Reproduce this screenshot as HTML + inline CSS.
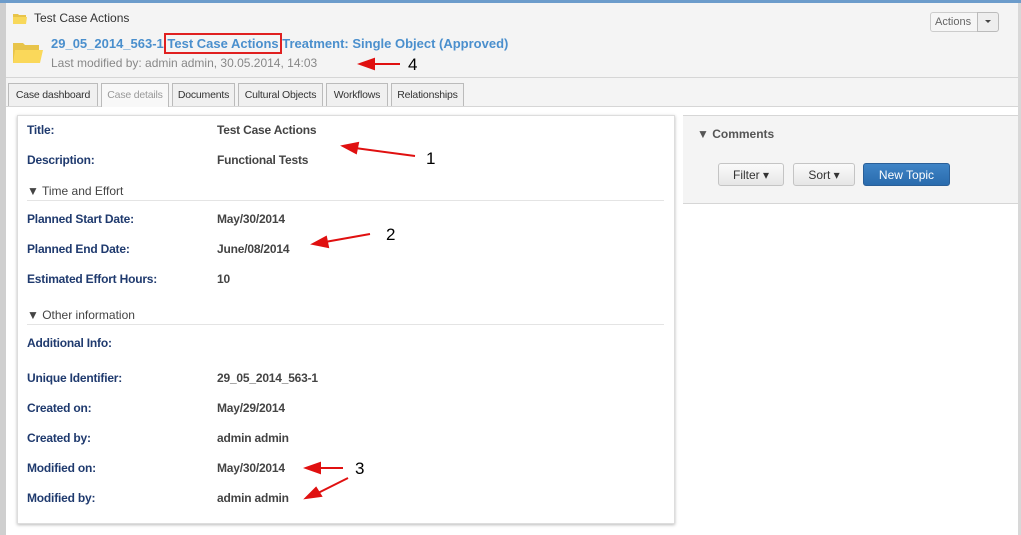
<!DOCTYPE html>
<html><head><style>
*{box-sizing:border-box;margin:0;padding:0}
body{width:1021px;height:535px;background:#fff;font-family:"Liberation Sans",Arial,sans-serif;position:relative;overflow:hidden}
.a{position:absolute}
.lbl{position:absolute;left:27px;font-size:12px;font-weight:bold;color:#1f3a6e;letter-spacing:-0.2px}
.val{position:absolute;left:217px;font-size:12px;font-weight:bold;color:#444;letter-spacing:-0.2px}
.tab{position:absolute;top:83px;height:23px;border:1px solid #bbb;border-bottom:none;background:#f0f0f0;font-size:10.5px;color:#333;padding:5px 0 0;text-align:center;white-space:nowrap;letter-spacing:-0.2px}
.sec{position:absolute;left:27px;font-size:12px;color:#444}
.btn{position:absolute;top:163px;height:23px;border:1px solid #c4c4c4;border-radius:3px;background:linear-gradient(#fafafa,#e6e6e6);font-size:12px;color:#333;text-align:center;padding-top:4px}
</style></head><body>
<div class="a" style="left:0;top:0;width:1021px;height:3px;background:#6c9ccb"></div>
<div class="a" style="left:0;top:3px;width:6px;height:532px;background:#cfcfcf"></div>
<div class="a" style="left:6px;top:3px;width:1012px;height:103px;background:#f4f4f4"></div>
<div class="a" style="left:1018px;top:3px;width:3px;height:532px;background:#d8d8d8"></div>
<div class="a" style="left:6px;top:77px;width:1012px;height:1px;background:#d6d6d6"></div>
<div class="a" style="left:6px;top:106px;width:1012px;height:1px;background:#d6d6d6"></div>
<svg class="a" style="left:13px;top:13px" width="14" height="11"><path d="M0 1h5l1 1h7v9H0z" fill="#e8c44a"/><path d="M0 4h14l-1 7H0z" fill="#f8d85a"/></svg>
<div class="a" style="left:34px;top:11px;font-size:12px;color:#333">Test Case Actions</div>
<div class="a" style="left:930px;top:12px;width:48px;height:20px;border:1px solid #ccc;border-radius:3px 0 0 3px;background:#f6f6f6;font-size:11px;color:#666;padding:3px 0 0 4px">Actions</div>
<div class="a" style="left:977px;top:12px;width:22px;height:20px;border:1px solid #bbb;border-radius:0 3px 3px 0;background:#eee"><div style="margin:7px 0 0 7px;width:0;height:0;border:3px solid transparent;border-top:3px solid #444"></div></div>
<svg class="a" style="left:13px;top:41px" width="30" height="24"><path d="M0 2h10l2 2h14v18H0z" fill="#e8c44a"/><path d="M2 9h28l-3 13H0z" fill="#fad85a"/></svg>
<div class="a" style="left:51px;top:36px;font-size:13px;font-weight:bold;color:#4a8fcd;white-space:nowrap">29_05_2014_563-1 <span style="outline:2px solid #e02020;outline-offset:1px">Test Case Actions</span> Treatment: Single Object (Approved)</div>
<div class="a" style="left:51px;top:56px;font-size:12px;color:#888">Last modified by: admin admin, 30.05.2014, 14:03</div>
<div class="tab" style="left:8px;width:90px">Case dashboard</div>
<div class="tab" style="left:101px;width:68px;background:#f8f8f8;color:#999;height:24px">Case details</div>
<div class="tab" style="left:172px;width:63px">Documents</div>
<div class="tab" style="left:238px;width:85px">Cultural Objects</div>
<div class="tab" style="left:326px;width:62px">Workflows</div>
<div class="tab" style="left:391px;width:73px">Relationships</div>
<div class="a" style="left:17px;top:115px;width:658px;height:409px;border:1px solid #ddd;box-shadow:0 1px 3px #bbb;background:#fff"></div>
<div class="lbl" style="top:123px">Title:</div><div class="val" style="top:123px">Test Case Actions</div>
<div class="lbl" style="top:153px">Description:</div><div class="val" style="top:153px">Functional Tests</div>
<div class="sec" style="top:184px">▼ Time and Effort</div>
<div class="a" style="left:27px;top:200px;width:637px;height:1px;background:#e4e4e4"></div>
<div class="lbl" style="top:212px">Planned Start Date:</div><div class="val" style="top:212px">May/30/2014</div>
<div class="lbl" style="top:242px">Planned End Date:</div><div class="val" style="top:242px">June/08/2014</div>
<div class="lbl" style="top:272px">Estimated Effort Hours:</div><div class="val" style="top:272px">10</div>
<div class="sec" style="top:308px">▼ Other information</div>
<div class="a" style="left:27px;top:324px;width:637px;height:1px;background:#e4e4e4"></div>
<div class="lbl" style="top:336px">Additional Info:</div>
<div class="lbl" style="top:371px">Unique Identifier:</div><div class="val" style="top:371px">29_05_2014_563-1</div>
<div class="lbl" style="top:401px">Created on:</div><div class="val" style="top:401px">May/29/2014</div>
<div class="lbl" style="top:431px">Created by:</div><div class="val" style="top:431px">admin admin</div>
<div class="lbl" style="top:461px">Modified on:</div><div class="val" style="top:461px">May/30/2014</div>
<div class="lbl" style="top:491px">Modified by:</div><div class="val" style="top:491px">admin admin</div>
<div class="a" style="left:683px;top:115px;width:335px;height:89px;background:#f4f4f4;border-top:1px solid #d6d6d6;border-bottom:1px solid #d6d6d6"></div>
<div class="a" style="left:697px;top:127px;font-size:12px;font-weight:bold;color:#555">▼ Comments</div>
<div class="btn" style="left:718px;width:66px">Filter ▾</div>
<div class="btn" style="left:793px;width:62px">Sort ▾</div>
<div class="btn" style="left:863px;width:87px;background:linear-gradient(#3f84c6,#2a6bad);border-color:#2a5f98;color:#fff">New Topic</div>
<svg class="a" style="left:0;top:0" width="1021" height="535">
<g stroke="#e01010" stroke-width="2" fill="#e01010">
<line x1="400" y1="64" x2="370" y2="64"/><path d="M360 64l14-5v10z"/>
<line x1="415" y1="156" x2="355" y2="148"/><path d="M343 146l15-3-2 10z"/>
<line x1="370" y1="234" x2="325" y2="242"/><path d="M313 244l13-7 2 10z"/>
<line x1="343" y1="468" x2="318" y2="468"/><path d="M306 468l14-5v10z"/>
<line x1="348" y1="478" x2="318" y2="493"/><path d="M306 498l10-10 5 8z"/>
</g>
<g font-family="Liberation Sans" font-size="17" fill="#000">
<text x="408" y="70">4</text><text x="426" y="164">1</text><text x="386" y="240">2</text><text x="355" y="474">3</text>
</g>
</svg>
</body></html>
